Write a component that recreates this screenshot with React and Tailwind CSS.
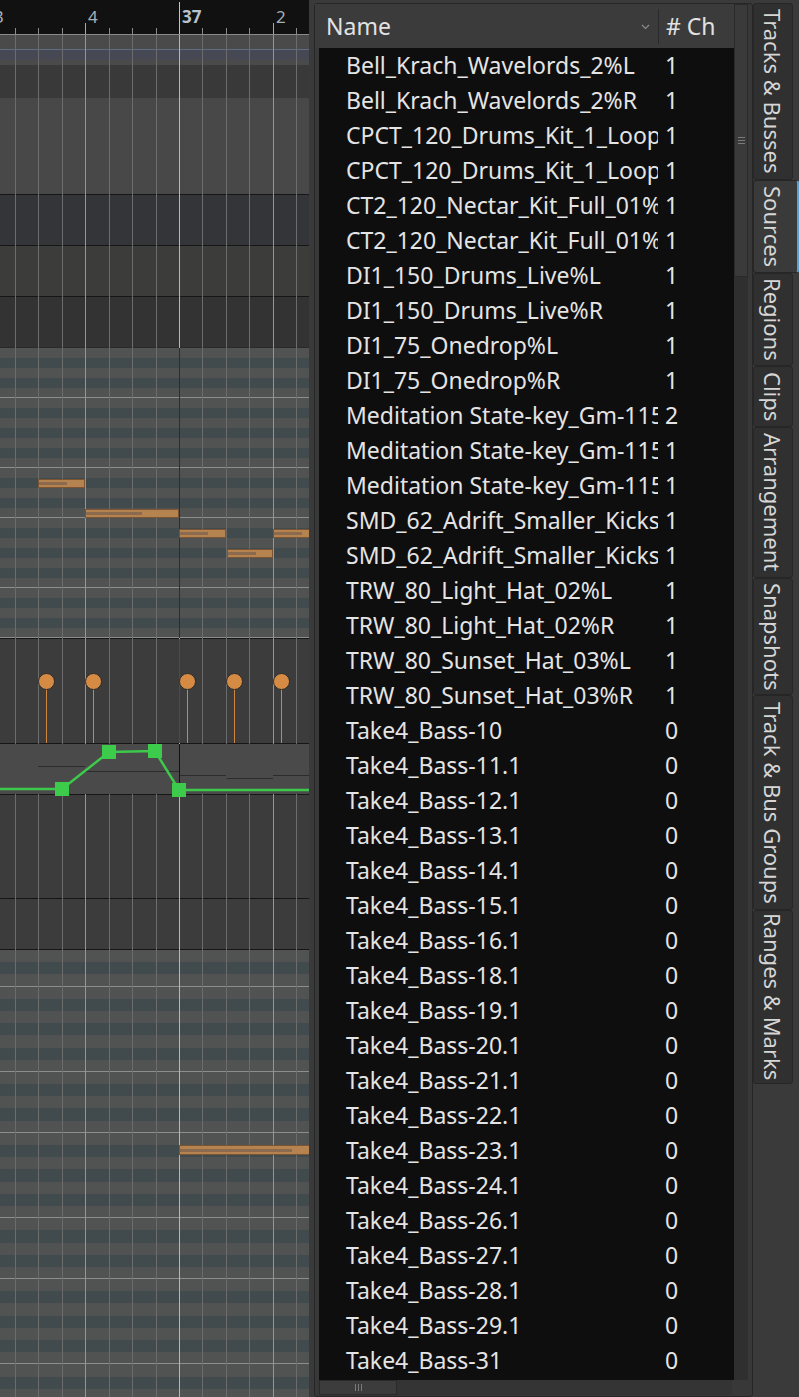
import React from 'react';

const GRID = [
  [15, 'm'], [38, 'm'], [62, 'm'], [85, 'b'], [109, 'm'], [132, 'm'], [156, 'm'],
  [179, 'B'], [202, 'm'], [226, 'm'], [249, 'm'], [273, 'b'], [296, 'm'],
];
const lineColor = { m: 'bg-[#6c6c6c]', b: 'bg-[#959595]', B: 'bg-[#b6b6b6]' };
const tickClass = { m: 'top-[28px] bg-[#8a8a8a]', b: 'top-[23px] bg-[#a8a8a8]', B: 'top-[2px] bg-[#c4c4c4]' };

const KEYS = ['E', 'D#', 'D', 'C#', 'C', 'B', 'A#', 'A', 'G#', 'G', 'F#', 'F'];

const SOURCES = [
  ['Bell_Krach_Wavelords_2%L', 1],
  ['Bell_Krach_Wavelords_2%R', 1],
  ['CPCT_120_Drums_Kit_1_Loop%L', 1],
  ['CPCT_120_Drums_Kit_1_Loop%R', 1],
  ['CT2_120_Nectar_Kit_Full_01%L', 1],
  ['CT2_120_Nectar_Kit_Full_01%R', 1],
  ['DI1_150_Drums_Live%L', 1],
  ['DI1_150_Drums_Live%R', 1],
  ['DI1_75_Onedrop%L', 1],
  ['DI1_75_Onedrop%R', 1],
  ['Meditation State-key_Gm-115_bpm', 2],
  ['Meditation State-key_Gm-115_bpm%L', 1],
  ['Meditation State-key_Gm-115_bpm%R', 1],
  ['SMD_62_Adrift_Smaller_Kicks%L', 1],
  ['SMD_62_Adrift_Smaller_Kicks%R', 1],
  ['TRW_80_Light_Hat_02%L', 1],
  ['TRW_80_Light_Hat_02%R', 1],
  ['TRW_80_Sunset_Hat_03%L', 1],
  ['TRW_80_Sunset_Hat_03%R', 1],
  ['Take4_Bass-10', 0],
  ['Take4_Bass-11.1', 0],
  ['Take4_Bass-12.1', 0],
  ['Take4_Bass-13.1', 0],
  ['Take4_Bass-14.1', 0],
  ['Take4_Bass-15.1', 0],
  ['Take4_Bass-16.1', 0],
  ['Take4_Bass-18.1', 0],
  ['Take4_Bass-19.1', 0],
  ['Take4_Bass-20.1', 0],
  ['Take4_Bass-21.1', 0],
  ['Take4_Bass-22.1', 0],
  ['Take4_Bass-23.1', 0],
  ['Take4_Bass-24.1', 0],
  ['Take4_Bass-26.1', 0],
  ['Take4_Bass-27.1', 0],
  ['Take4_Bass-28.1', 0],
  ['Take4_Bass-29.1', 0],
  ['Take4_Bass-31', 0],
];

const TABS = [
  ['Tracks & Busses', 'h-[177px]'],
  ['Sources', 'h-[93px]', true],
  ['Regions', 'h-[93px]'],
  ['Clips', 'h-[61px]'],
  ['Arrangement', 'h-[151px]'],
  ['Snapshots', 'h-[117px]'],
  ['Track & Bus Groups', 'h-[215px]'],
  ['Ranges & Marks', 'h-[174px]'],
];

// piano roll notes: x, top (px inside roll), width, height, velocity bar width
const UPPER_NOTES = [
  [38, 131, 47, 9, 28],
  [85, 161, 94, 9, 56],
  [179, 181, 47, 9, 28],
  [227, 201, 46, 9, 28],
  [273, 181, 46, 9, 28],
];
const LOWER_NOTES = [[179, 195, 140, 10, 112]];

const LOLLIPOPS = [46, 93, 187, 234, 281];

function Note({ n }) {
  const [x, y, w, h, v] = n;
  return (
    <div
      className="absolute z-20 flex items-center bg-[#b5834f] border border-[#7b5433]"
      style={{ left: x, top: y, width: w, height: h }}
    >
      <div className="h-[3px] bg-[#8b6a4d]" style={{ width: v }} />
    </div>
  );
}

function PianoRoll({ start, rows, rowClass, notes, className = '' }) {
  return (
    <div className={`relative flex flex-col overflow-hidden ${className}`}>
      {Array.from({ length: rows }, (_, i) => {
        const key = KEYS[(start + i) % 12];
        const black = key.includes('#');
        const edge = key === 'C' || key === 'F';
        return (
          <div
            key={i}
            className={`shrink-0 ${rowClass} ${black ? 'bg-[#414b4e]' : 'bg-[#515252]'} ${edge ? 'border-b border-[#8d8d8d]' : ''}`}
          />
        );
      })}
      {notes.map((n, i) => <Note key={i} n={n} />)}
    </div>
  );
}

function Ruler() {
  return (
    <div className="relative h-[35px] shrink-0 bg-[#111111] border-b border-[#8a8a8a] text-[17px] leading-none text-[#a6afb8]">
      {GRID.map(([x, k]) => (
        <div key={x} className={`absolute bottom-0 w-px ${tickClass[k]}`} style={{ left: x }} />
      ))}
      <span className="absolute left-[-6px] top-[8px]">3</span>
      <span className="absolute left-[88px] top-[8px]">4</span>
      <span className="absolute left-[182px] top-[8px] font-bold text-[#b9c2cc]">37</span>
      <span className="absolute left-[276px] top-[8px]">2</span>
    </div>
  );
}

function Sep({ c = 'bg-[#161616]' }) {
  return <div className={`h-px shrink-0 ${c}`} />;
}

function AutomationLane() {
  const pts = [[0, 45], [62, 45], [109, 8], [155, 7], [179, 46], [309, 46]];
  const squares = [[62, 45], [109, 8], [155, 7], [179, 46]];
  return (
    <div className="relative z-[15] h-[50px] shrink-0 bg-[#4a4a4a]">
      <div className="absolute left-[38px] top-[22px] w-[47px] h-px bg-[#2c2c2c]" />
      <div className="absolute left-[85px] top-[27px] w-[94px] h-px bg-[#2c2c2c]" />
      <div className="absolute left-[180px] top-[31px] w-[46px] h-px bg-[#2c2c2c]" />
      <div className="absolute left-[227px] top-[34px] w-[46px] h-px bg-[#2c2c2c]" />
      <div className="absolute left-[273px] top-[31px] w-[36px] h-px bg-[#2c2c2c]" />
      <div className="absolute left-[179px] top-0 w-px h-full bg-[#121212]" />
      <svg className="absolute left-0 top-0 overflow-visible" width="309" height="50">
        <polyline
          points={pts.map((p) => p.join(',')).join(' ')}
          fill="none"
          stroke="#3dc94b"
          strokeWidth="2.5"
        />
        {squares.map(([x, y]) => (
          <rect key={x} x={x - 7} y={y - 7} width="14" height="14" fill="#3ccb4b" />
        ))}
      </svg>
    </div>
  );
}

function VelocityLane() {
  return (
    <div className="relative h-[104px] shrink-0 bg-[#3c3c3c]">
      {LOLLIPOPS.map((x) => (
        <div key={x}>
          <div className="absolute z-20 top-[50px] bottom-0 w-px bg-[#d0863f]" style={{ left: x }} />
          <div
            className="absolute z-20 top-[34px] w-[17px] h-[17px] rounded-full bg-[#d68b45] border border-[#2a2a2a]"
            style={{ left: x - 8 }}
          />
        </div>
      ))}
    </div>
  );
}

function Editor() {
  return (
    <div className="relative w-[309px] h-full shrink-0 flex flex-col overflow-hidden">
      <Ruler />
      <div className="h-[14px] shrink-0 bg-[#4a4a4a]" />
      <Sep c="bg-[#5f6e82]" />
      <div className="h-[10px] shrink-0 bg-[#464953]" />
      <div className="h-[5px] shrink-0 bg-[#4a4a4a]" />
      <div className="h-[33px] shrink-0 bg-[#393939]" />
      <div className="h-[96px] shrink-0 bg-[#484848]" />
      <Sep />
      <div className="h-[50px] shrink-0 bg-[#343538]" />
      <Sep />
      <div className="h-[50px] shrink-0 bg-[#3c3c3a]" />
      <Sep />
      <div className="h-[50px] shrink-0 bg-[#333333]" />
      <Sep c="bg-[#2a2a2a]" />
      <PianoRoll start={0} rows={29} rowClass="h-[10px]" notes={UPPER_NOTES} className="shrink-0" />
      <Sep />
      <VelocityLane />
      <Sep />
      <AutomationLane />
      <Sep />
      <div className="h-[103px] shrink-0 bg-[#3c3c3c]" />
      <Sep />
      <div className="h-[50px] shrink-0 bg-[#3c3c3c]" />
      <Sep />
      <PianoRoll start={2} rows={37} rowClass="h-[12.2px]" notes={LOWER_NOTES} className="flex-1 min-h-0" />

      {/* grid lines over the canvas */}
      <div className="absolute left-0 top-[35px] bottom-0 w-full z-10 pointer-events-none">
        {GRID.map(([x, k]) => (
          <div key={x} className={`absolute top-0 bottom-0 w-px ${lineColor[k]}`} style={{ left: x }} />
        ))}
      </div>
      {/* region boundary */}
      <div className="absolute left-[179px] top-[348px] h-[290px] w-px z-[12] bg-[#2d2d2d]" />
      <div className="absolute left-[179px] top-[639px] h-[104px] w-px z-[12] bg-[#4c4c4c]" />
    </div>
  );
}

function SourcesPanel() {
  return (
    <div className="ml-[5px] mt-[3px] w-[439px] h-[1394px] shrink-0 flex flex-col border border-[#262626] rounded-[3px] bg-[#383838]">
      <div className="flex flex-1 min-h-0">
        <div className="w-[419px] flex flex-col">
          <div className="h-[44px] shrink-0 flex items-center bg-[#3b3b3b] text-[23px] text-[#e2e2e2]">
            <div className="w-[343px] shrink-0 flex items-center pl-[11px] pr-[8px]">
              <span className="flex-1">Name</span>
              <svg width="9" height="6" viewBox="0 0 9 6" className="mt-[1px]">
                <polyline points="1,1 4.5,4.5 8,1" fill="none" stroke="#8a8a8a" strokeWidth="1.2" />
              </svg>
            </div>
            <div className="w-px h-[35px] bg-[#2a2a2a]" />
            <span className="pl-[7px]"># Ch</span>
          </div>
          <div className="flex-1 min-h-0 ml-[4px] bg-[#0e0e0e] overflow-hidden text-[23px] leading-[35px] text-[#e4e4e4]">
            {SOURCES.map(([name, ch], i) => (
              <div key={i} className="h-[35px] flex">
                <div className="w-[339px] shrink-0 pl-[27px] overflow-hidden whitespace-nowrap">{name}</div>
                <div className="pl-[7px]">{ch}</div>
              </div>
            ))}
          </div>
        </div>
        <div className="w-[14px] shrink-0 flex flex-col bg-[#2f2f2f]">
          <div className="h-[273px] shrink-0 flex items-center justify-center bg-[#3a3a3a] border border-[#2a2a2a]">
            <div className="flex flex-col gap-[2px]">
              <div className="w-[7px] h-px bg-[#7a7a7a]" />
              <div className="w-[7px] h-px bg-[#7a7a7a]" />
              <div className="w-[7px] h-px bg-[#7a7a7a]" />
            </div>
          </div>
        </div>
      </div>
      <div className="h-[16px] shrink-0 flex pl-[4px] pr-[20px] pb-[1px]">
        <div className="flex-1 flex bg-[#343434]">
          <div className="w-[78px] h-full flex items-center justify-center gap-[2px] bg-[#3c3c3c] border border-[#2a2a2a]">
            <div className="w-px h-[7px] bg-[#7a7a7a]" />
            <div className="w-px h-[7px] bg-[#7a7a7a]" />
            <div className="w-px h-[7px] bg-[#7a7a7a]" />
          </div>
        </div>
      </div>
    </div>
  );
}

function Tabs() {
  return (
    <div className="flex-1 flex flex-col pt-[3px] text-[22px] text-[#d6d6d6]">
      {TABS.map(([label, h, active]) => (
        <div
          key={label}
          className={`${h} shrink-0 flex items-center justify-center rounded-[3px] border border-[#262626] [writing-mode:vertical-rl] whitespace-nowrap ${
            active ? 'w-[46px] bg-[#3a3a3a] border-r-2 border-r-[#5aa3cf] pr-[6px]' : 'w-[40px] bg-[#303030]'
          }`}
        >
          {label}
        </div>
      ))}
    </div>
  );
}

export default function App() {
  return (
    <div className="flex w-[799px] h-[1397px] overflow-hidden bg-[#3a3a3a] font-['Noto_Sans','DejaVu_Sans',sans-serif] leading-none">
      <Editor />
      <SourcesPanel />
      <Tabs />
    </div>
  );
}
